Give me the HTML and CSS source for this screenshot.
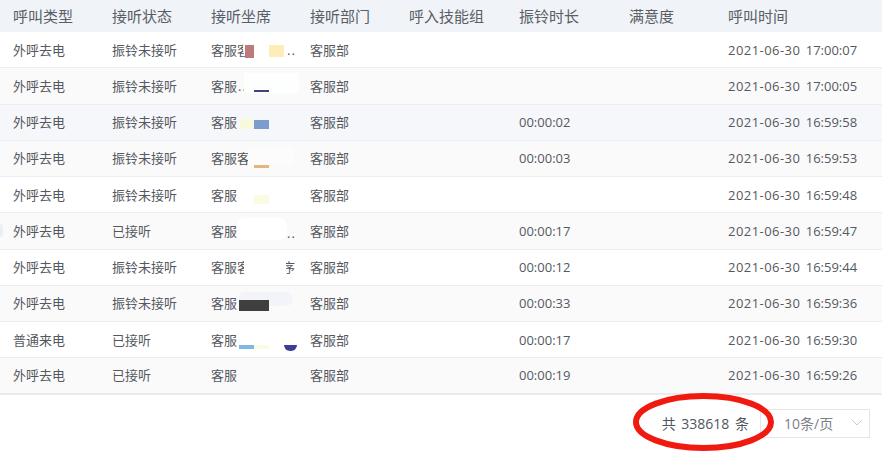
FILE: index.html
```html
<!DOCTYPE html>
<html lang="zh">
<head>
<meta charset="utf-8">
<title>呼叫记录</title>
<link rel="stylesheet" href="styles.css">
</head>
<body>
<div class="page">
  <div class="table">
    <div class="row head"><span>呼叫类型</span><span>接听状态</span><span>接听坐席</span><span>接听部门</span><span>呼入技能组</span><span>振铃时长</span><span>满意度</span><span>呼叫时间</span></div>
    <div class="row"><span>外呼去电</span><span>振铃未接听</span><span class="agent">客服客<i class="mask m1a"></i><i class="mask m1b"></i><i class="mask m1c"></i><i class="dots d1">..</i></span><span>客服部</span><span></span><span></span><span></span><span class="time"><b>2021-06-30</b> 17:00:07</span></div>
    <div class="row soft"><span>外呼去电</span><span>振铃未接听</span><span class="agent">客服<i class="dots d2">..</i><i class="mask m2a"></i><i class="mask m2b"></i></span><span>客服部</span><span></span><span></span><span></span><span class="time"><b>2021-06-30</b> 17:00:05</span></div>
    <div class="row hover"><span>外呼去电</span><span>振铃未接听</span><span class="agent">客服<i class="mask m3a"></i><i class="mask m3b"></i></span><span>客服部</span><span></span><span>00:00:02</span><span></span><span class="time"><b>2021-06-30</b> 16:59:58</span></div>
    <div class="row soft"><span>外呼去电</span><span>振铃未接听</span><span class="agent">客服客<i class="mask m4c"></i><i class="mask m4a"></i></span><span>客服部</span><span></span><span>00:00:03</span><span></span><span class="time"><b>2021-06-30</b> 16:59:53</span></div>
    <div class="row"><span>外呼去电</span><span>振铃未接听</span><span class="agent">客服<i class="mask m5a"></i></span><span>客服部</span><span></span><span></span><span></span><span class="time"><b>2021-06-30</b> 16:59:48</span></div>
    <div class="row soft"><i class="blob"></i><span>外呼去电</span><span>已接听</span><span class="agent">客服<i class="mask m6a"></i><i class="dots d6">..</i></span><span>客服部</span><span></span><span>00:00:17</span><span></span><span class="time"><b>2021-06-30</b> 16:59:47</span></div>
    <div class="row"><span>外呼去电</span><span>振铃未接听</span><span class="agent">客服客<i class="mask m7a"></i><i class="tail">序</i></span><span>客服部</span><span></span><span>00:00:12</span><span></span><span class="time"><b>2021-06-30</b> 16:59:44</span></div>
    <div class="row soft"><span>外呼去电</span><span>振铃未接听</span><span class="agent">客服<i class="mask m8a"></i><i class="mask m8b"></i></span><span>客服部</span><span></span><span>00:00:33</span><span></span><span class="time"><b>2021-06-30</b> 16:59:36</span></div>
    <div class="row"><span>普通来电</span><span>已接听</span><span class="agent">客服<i class="mask m9a"></i><i class="mask m9b"></i><i class="mask m9c"></i></span><span>客服部</span><span></span><span>00:00:17</span><span></span><span class="time"><b>2021-06-30</b> 16:59:30</span></div>
    <div class="row soft last"><span>外呼去电</span><span>已接听</span><span class="agent">客服</span><span>客服部</span><span></span><span>00:00:19</span><span></span><span class="time"><b>2021-06-30</b> 16:59:26</span></div>
  </div>
  <div class="pager">
    <span class="total">共 338618 条</span>
    <div class="size"><span>10条/页</span>
      <svg class="chev" width="12" height="8" viewBox="0 0 12 8"><path d="M1 1l5 5 5-5" fill="none" stroke="#c8cbd0" stroke-width="1"/></svg>
    </div>
  </div>
  <svg class="circle" width="150" height="64" viewBox="0 0 150 64"><ellipse cx="73.5" cy="31" rx="67.5" ry="26" fill="none" stroke="#f01a10" stroke-width="6"/></svg>
</div>
</body>
</html>
```
FILE: styles.css
```css
html, body { margin: 0; padding: 0; background: #fff; }
body { font-family: "Open Sans", "Noto Sans CJK SC", sans-serif; color: #55585e; font-size: 13px; }
.page { position: relative; width: 882px; height: 451px; overflow: hidden; }
.row {
  position: relative;
  display: grid;
  grid-template-columns: 99px 99px 99px 99px 110px 110px 99px 1fr;
  height: 36.25px;
  box-sizing: border-box;
  border-bottom: 1px solid #ebedf2;
  align-items: center;
  padding-left: 13px;
  white-space: nowrap;
  line-height: 18px;
}
.row.soft { background: #fafafb; }
.row.hover { background: #f5f7fa; }
.row.head { height: 32px; background: #f0f3f8; border-bottom: 0; font-size: 15px; color: #5a5e66; }
.row.last { border-bottom: 2px solid #e9ebf0; }
.time { word-spacing: 2px; }
.time b { font-weight: 400; letter-spacing: .45px; }
.agent { position: relative; display: block; height: 18px; overflow: visible; }
.mask { position: absolute; display: block; }
.blob { position: absolute; left: 0; top: 11px; width: 3px; height: 13px; background: #eceef2; border-radius: 0 3px 3px 0; }
.dots { position: absolute; font-style: normal; line-height: 18px; letter-spacing: 1px; }
.tail { position: absolute; left: 71px; top: 0; font-style: normal; line-height: 18px; clip-path: inset(0 0 0 4px); }
.d1 { left: 76px; top: 0; }
.d2 { left: 27px; top: 0; }
.d6 { left: 76px; top: 2px; }
.m1a { left: 32px; top: -3px; width: 45px; height: 20px; background: #fff; border-radius: 8px; }
.m1b { left: 34px; top: 4px; width: 9px; height: 13px; background: #bb7b7b; }
.m1c { left: 58px; top: 4px; width: 15px; height: 12px; background: #fdeeb9; }
.m2a { left: 33px; top: -4px; width: 55px; height: 20px; background: #fdfefe; }
.m2b { left: 43px; top: 13px; width: 15px; height: 2px; background: #44427e; }
.m3a { left: 29px; top: 6px; width: 14px; height: 10px; background: #f8f8dc; }
.m3b { left: 43px; top: 7px; width: 15px; height: 9px; background: #7c9ccf; }
.m4c { left: 37px; top: -2px; width: 45px; height: 18px; background: #fcfcfd; }
.m4a { left: 43px; top: 16px; width: 15px; height: 3px; background: #e5b57d; }
.m5a { left: 43px; top: 9px; width: 15px; height: 9px; background: #fbfbe2; }
.m6a { left: 26px; top: -4px; width: 50px; height: 22px; background: #fff; border-radius: 8px; }
.m7a { left: 33px; top: -4px; width: 40px; height: 22px; background: #fff; }
.m8a { left: 27px; top: -2px; width: 55px; height: 14px; background: #f3f4fa; border-radius: 8px; }
.m8b { left: 28px; top: 6px; width: 30px; height: 11px; background: #3f3f3f; }
.m9a { left: 28px; top: 14px; width: 15px; height: 4px; background: #7fb6e4; }
.m9b { left: 43px; top: 14px; width: 15px; height: 4px; background: #fbfbe2; }
.m9c { left: 73px; top: 14px; width: 13px; height: 6px; background: #3d3d94; border-radius: 0 0 7px 7px; }
.pager { display: flex; justify-content: flex-end; align-items: center; gap: 11px; padding: 14px 12px 0 0; }
.total { color: #50555d; font-size: 14px; word-spacing: 2px; }
.size {
  width: 110px; height: 29px; box-sizing: border-box;
  border: 1px solid #e3e5ea; display: flex; align-items: center; justify-content: space-between;
  padding: 0 6px 0 23px; color: #7c8087; font-size: 14px;
}
.circle { position: absolute; left: 630px; top: 391px; }
```
